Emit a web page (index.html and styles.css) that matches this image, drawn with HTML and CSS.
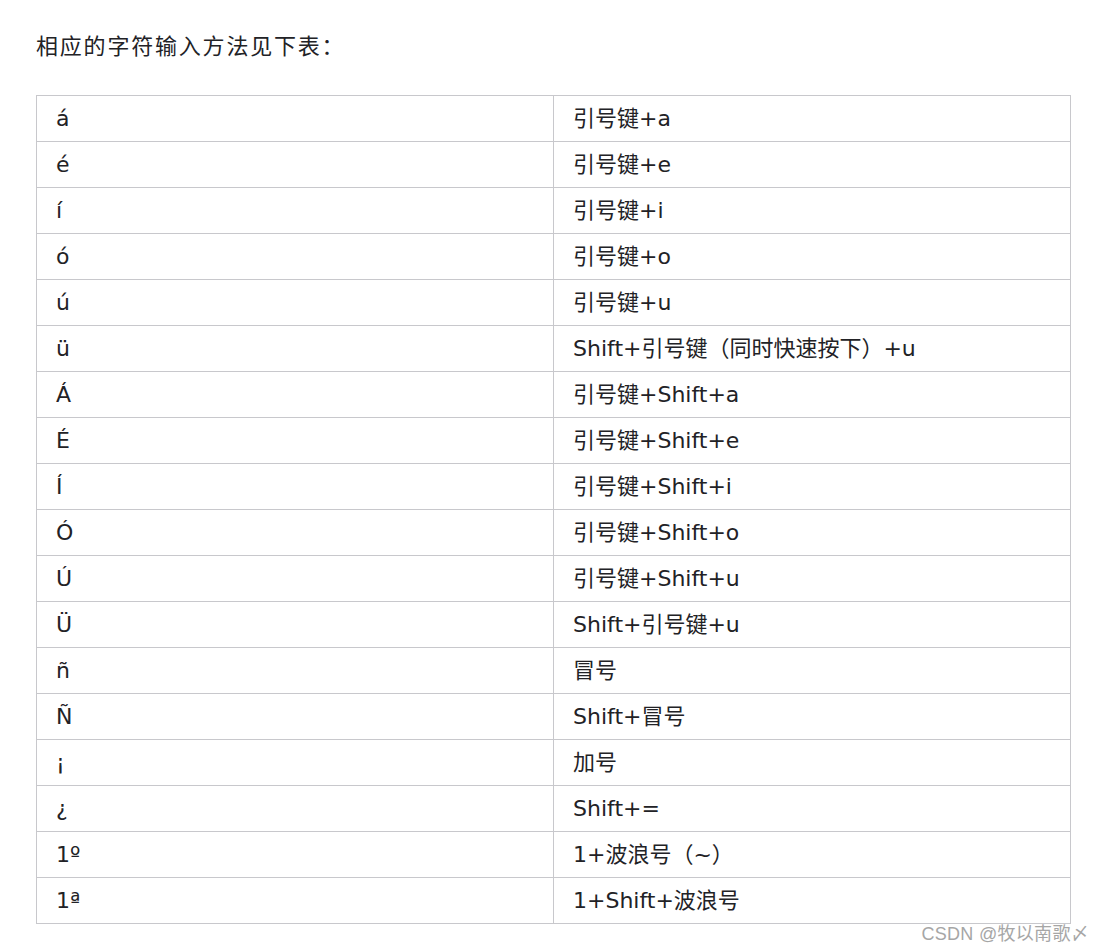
FILE: index.html
```html
<!DOCTYPE html>
<html lang="zh-CN">
<head>
<meta charset="utf-8">
<title>字符输入方法</title>
<link rel="stylesheet" href="styles.css">
</head>
<body>
<main class="article">
  <p class="intro">相应的字符输入方法见下表：</p>
  <table class="chars">
    <tbody>
      <tr><td>á</td><td>引号键+a</td></tr>
      <tr><td>é</td><td>引号键+e</td></tr>
      <tr><td>í</td><td>引号键+i</td></tr>
      <tr><td>ó</td><td>引号键+o</td></tr>
      <tr><td>ú</td><td>引号键+u</td></tr>
      <tr><td>ü</td><td>Shift+引号键（同时快速按下）+u</td></tr>
      <tr><td>Á</td><td>引号键+Shift+a</td></tr>
      <tr><td>É</td><td>引号键+Shift+e</td></tr>
      <tr><td>Í</td><td>引号键+Shift+i</td></tr>
      <tr><td>Ó</td><td>引号键+Shift+o</td></tr>
      <tr><td>Ú</td><td>引号键+Shift+u</td></tr>
      <tr><td>Ü</td><td>Shift+引号键+u</td></tr>
      <tr><td>ñ</td><td>冒号</td></tr>
      <tr><td>Ñ</td><td>Shift+冒号</td></tr>
      <tr><td>¡</td><td>加号</td></tr>
      <tr><td>¿</td><td>Shift+=</td></tr>
      <tr><td>1º</td><td>1+波浪号（~）</td></tr>
      <tr><td>1ª</td><td>1+Shift+波浪号</td></tr>
    </tbody>
  </table>
  <div class="watermark">CSDN @牧以南歌〆</div>
</main>
</body>
</html>
```

FILE: styles.css
```css
html, body {
  margin: 0;
  padding: 0;
  background: #ffffff;
}

body {
  font-family: "DejaVu Sans", "Noto Sans CJK SC", sans-serif;
  color: #222226;
}

.article {
  width: 1053px;
  padding: 22px 0 0 36px;
}

.intro {
  margin: 0 0 29px 0;
  font-family: "Noto Sans CJK SC", sans-serif;
  font-size: 22px;
  line-height: 44px;
  letter-spacing: 1.8px;
}

.chars {
  width: 1035px;
  border-collapse: collapse;
  table-layout: fixed;
  font-size: 22px;
}

.chars td {
  border: 1px solid #c8c8cc;
  height: 46px;
  padding: 0 0 0 19px;
  line-height: 45px;
  vertical-align: middle;
  box-sizing: border-box;
  white-space: nowrap;
}

.chars td:first-child {
  width: 517px;
}

.watermark {
  text-align: right;
  font-family: "Liberation Sans", "Noto Sans CJK SC", sans-serif;
  font-size: 18px;
  letter-spacing: 0.3px;
  color: #a6a6a6;
  line-height: 20px;
}
```
